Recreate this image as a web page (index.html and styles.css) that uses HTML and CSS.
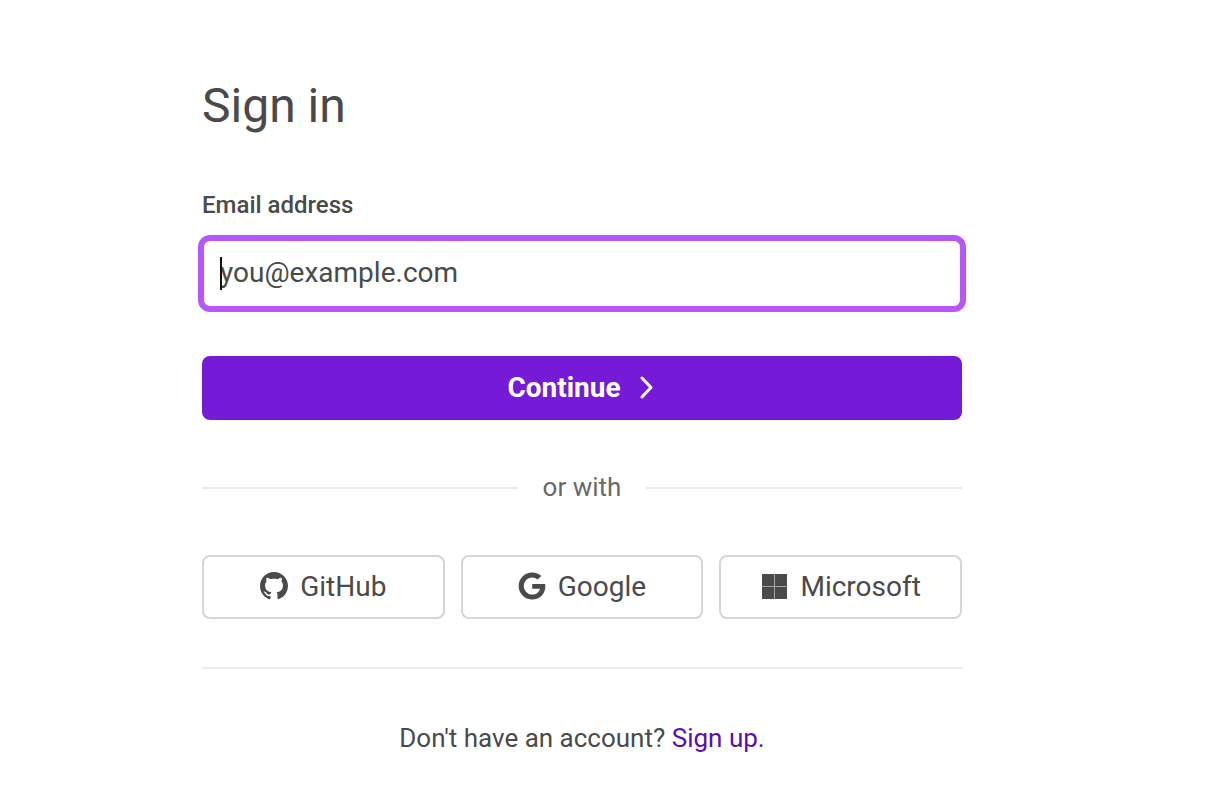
FILE: index.html
```
<!DOCTYPE html>
<html lang="en">
<head>
<meta charset="UTF-8">
<meta name="viewport" content="width=device-width, initial-scale=1.0">
<title>Sign in</title>
<link rel="stylesheet" href="styles.css">
</head>
<body>

<main class="signin">
  <h1>Sign in</h1>

  <form class="email-form">
    <label for="email">Email address</label>
    <div class="field">
      <input type="email" id="email" placeholder="you@example.com">
      <span class="caret"></span>
    </div>
    <button type="submit" class="continue">
      Continue
      <svg width="16" height="24" viewBox="0 0 16 24" fill="none" stroke="currentColor" stroke-width="3" stroke-linecap="round" stroke-linejoin="round"><path d="M3 3l9 9.500-9 9.500"/></svg>
    </button>
  </form>

  <div class="divider">or with</div>

  <!-- social logins -->
  <div class="providers">
    <button type="button">
      <svg width="28" height="28" viewBox="0 0 16 16" fill="currentColor"><path d="M8 0C3.580 0 0 3.580 0 8c0 3.540 2.290 6.530 5.470 7.590.4.070.55-.17.55-.38 0-.19-.01-.82-.01-1.490-2.010.37-2.530-.49-2.690-.94-.09-.23-.48-.94-.82-1.130-.28-.15-.68-.52-.01-.53.63-.01 1.080.58 1.230.82.72 1.210 1.870.87 2.330.66.07-.52.28-.87.51-1.070-1.780-.2-3.640-.89-3.640-3.950 0-.87.31-1.590.82-2.150-.08-.2-.36-1.020.08-2.120 0 0 .67-.21 2.200.82.64-.18 1.320-.27 2-.27s1.360.09 2 .27c1.530-1.040 2.200-.82 2.200-.82.44 1.100.16 1.920.08 2.120.51.56.82 1.270.82 2.150 0 3.070-1.870 3.750-3.650 3.950.29.25.54.73.54 1.480 0 1.070-.01 1.930-.01 2.200 0 .21.15.46.55.38A8.010 8.010 0 0 0 16 8c0-4.420-3.580-8-8-8z"/></svg>
      GitHub
    </button>
    <button type="button">
      <svg width="28" height="28" viewBox="0 0 488 512" fill="currentColor"><path d="M488 261.800C488 403.300 391.100 504 248 504 110.800 504 0 393.200 0 256S110.800 8 248 8c66.800 0 123 24.500 166.300 64.900l-67.500 64.900C258.500 52.600 94.300 116.600 94.300 256c0 86.500 69.100 156.600 153.700 156.600 98.200 0 135-70.400 140.800-106.900H248v-85.300h236.100c2.300 12.700 3.900 24.900 3.900 41.400z"/></svg>
      Google
    </button>
    <button type="button">
      <svg width="28" height="28" viewBox="0 0 28 28" fill="currentColor"><path d="M2 2h12v12H2zM15 2h12v12H15zM2 15h12v12H2zM15 15h12v12H15z"/><path fill-opacity=".5" d="M14 2h1v25h-1zM2 14h12v1H2zM15 14h12v1H15z"/></svg>
      Microsoft
    </button>
  </div>

  <p class="signup">Don't have an account? <a href="#">Sign up.</a></p>
</main>

</body>
</html>
```
FILE: styles.css
```
* {
  box-sizing: border-box;
}
body {
  margin: 0;
  font-family: Roboto, "Liberation Sans", sans-serif;
  color: #4a4a4a;
  background-color: #fff;
}
.signin {
  margin: 0 244px 0 202px;
  padding-top: 76px;
}
h1 {
  margin: 0 0 55px;
  font-size: 48px;
  line-height: 60px;
  font-weight: 400;
}
.email-form {
  display: flex;
  flex-direction: column;
}
label {
  margin-bottom: 20px;
  font-size: 24px;
  line-height: 28px;
  font-weight: 500;
}
.field {
  position: relative;
  display: flex;
  margin-bottom: 48px;
}
.field input {
  width: 100%;
  height: 69px;
  padding: 0 16px 2px;
  font-family: inherit;
  font-size: 28px;
  color: inherit;
  background-color: #fff;
  border: 2px solid #b757f8;
  border-radius: 8px;
  outline: none;
  box-shadow: 0 0 0 4px #b757f8;
}
.field input::placeholder {
  color: #4a4a4a;
  opacity: 1;
}
.caret {
  position: absolute;
  left: 18px;
  top: 18px;
  width: 2px;
  height: 33px;
  background-color: #111;
}
button {
  display: flex;
  align-items: center;
  justify-content: center;
  height: 64px;
  padding: 0 0 2px;
  font-family: inherit;
  font-size: 28px;
  border-radius: 8px;
  cursor: pointer;
}
.continue {
  gap: 18px;
  padding-right: 2px;
  font-weight: 700;
  color: #fff;
  background-color: #751ad6;
  border: none;
}
.divider {
  display: flex;
  align-items: center;
  gap: 25px;
  margin: 51px 0;
  font-size: 26px;
  line-height: 33px;
  color: #696969;
}
.divider::before,
.divider::after {
  content: "";
  flex: 1;
  height: 2px;
  background-color: #ebebeb;
}
.providers {
  display: grid;
  grid-template-columns: repeat(3, 1fr);
  gap: 16px;
  padding-bottom: 48px;
  border-bottom: 2px solid #ebebeb;
}
.providers button {
  gap: 12px;
  color: #4a4a4a;
  background-color: #fff;
  border: 2px solid #d5d5d5;
}
.signup {
  margin: 51px 0 0;
  font-size: 26px;
  line-height: 36px;
  text-align: center;
}
.signup a {
  color: #5b0ead;
  text-decoration: none;
}
```
